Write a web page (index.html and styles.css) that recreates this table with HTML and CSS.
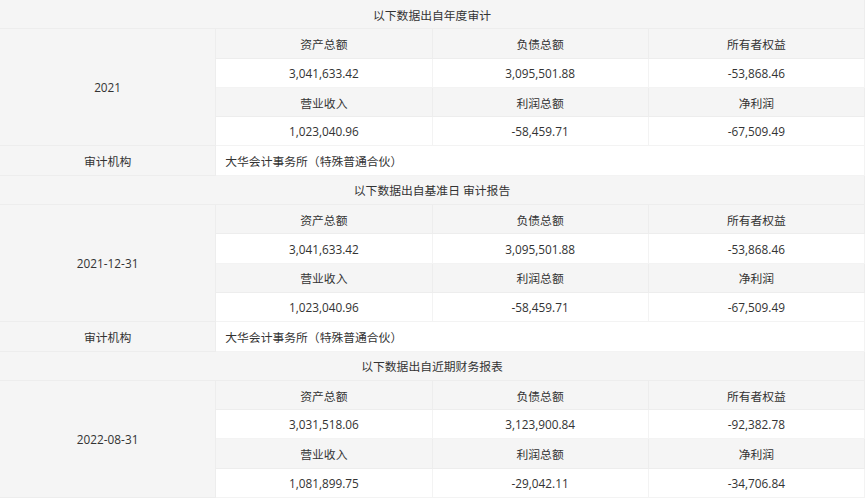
FILE: index.html
```html
<!DOCTYPE html>
<html lang="zh-CN">
<head>
<meta charset="utf-8">
<title>审计数据</title>
<link rel="stylesheet" href="styles.css">
</head>
<body>
<div class="sheet">
  <div class="cell head">以下数据出自年度审计</div>
  <div class="cell side">2021</div>
  <div class="cell lab">资产总额</div>
  <div class="cell lab">负债总额</div>
  <div class="cell lab">所有者权益</div>
  <div class="cell val">3,041,633.42</div>
  <div class="cell val">3,095,501.88</div>
  <div class="cell val">-53,868.46</div>
  <div class="cell lab">营业收入</div>
  <div class="cell lab">利润总额</div>
  <div class="cell lab">净利润</div>
  <div class="cell val">1,023,040.96</div>
  <div class="cell val">-58,459.71</div>
  <div class="cell val">-67,509.49</div>
  <div class="cell lab">审计机构</div>
  <div class="cell wide">大华会计事务所（特殊普通合伙）</div>

  <div class="cell head">以下数据出自基准日 审计报告</div>
  <div class="cell side">2021-12-31</div>
  <div class="cell lab">资产总额</div>
  <div class="cell lab">负债总额</div>
  <div class="cell lab">所有者权益</div>
  <div class="cell val">3,041,633.42</div>
  <div class="cell val">3,095,501.88</div>
  <div class="cell val">-53,868.46</div>
  <div class="cell lab">营业收入</div>
  <div class="cell lab">利润总额</div>
  <div class="cell lab">净利润</div>
  <div class="cell val">1,023,040.96</div>
  <div class="cell val">-58,459.71</div>
  <div class="cell val">-67,509.49</div>
  <div class="cell lab">审计机构</div>
  <div class="cell wide">大华会计事务所（特殊普通合伙）</div>

  <div class="cell head">以下数据出自近期财务报表</div>
  <div class="cell side">2022-08-31</div>
  <div class="cell lab">资产总额</div>
  <div class="cell lab">负债总额</div>
  <div class="cell lab">所有者权益</div>
  <div class="cell val">3,031,518.06</div>
  <div class="cell val">3,123,900.84</div>
  <div class="cell val">-92,382.78</div>
  <div class="cell lab">营业收入</div>
  <div class="cell lab">利润总额</div>
  <div class="cell lab">净利润</div>
  <div class="cell val">1,081,899.75</div>
  <div class="cell val">-29,042.11</div>
  <div class="cell val">-34,706.84</div>
</div>
</body>
</html>
```
FILE: styles.css
```css
html, body {
  margin: 0;
  padding: 0;
  background: #ffffff;
  overflow: hidden;
}

.sheet {
  display: grid;
  grid-template-columns: repeat(4, 1fr);
  grid-auto-rows: 29.3px;
  font-family: "Open Sans", "Noto Sans CJK SC", sans-serif;
  font-size: 11.8px;
  color: #333333;
}

.cell {
  display: flex;
  align-items: center;
  justify-content: center;
  box-sizing: border-box;
  border-right: 1px solid #ededed;
  border-bottom: 1px solid #ededed;
  white-space: nowrap;
}

.head {
  grid-column: 1 / -1;
  background: #f5f5f5;
}

.side {
  grid-row: span 4;
  background: #f5f5f5;
}

.lab {
  background: #f5f5f5;
}

.val {
  background: #ffffff;
  border-color: #f3f3f3;
}

.wide {
  grid-column: span 3;
  justify-content: flex-start;
  padding-left: 9px;
  background: #ffffff;
  border-color: #f3f3f3;
}
```
